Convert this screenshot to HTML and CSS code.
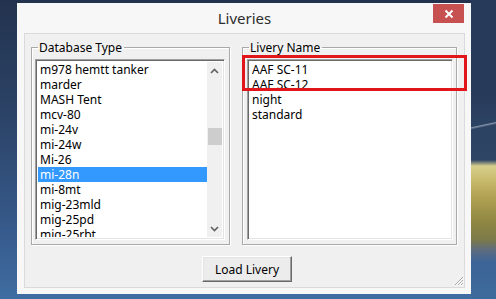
FILE: index.html
```html
<!DOCTYPE html>
<html>
<head>
<meta charset="utf-8">
<link rel="stylesheet" href="styles.css">
</head>
<body>
<div class="desktop">
  <div class="window">
    <div class="titlebar">
      <span class="spacer"></span>
      <span class="title">Liveries</span>
      <span class="close"><svg width="10" height="10" viewBox="0 0 10 10"><path d="M1.5 1.5 L8.5 8.5 M8.5 1.5 L1.5 8.5" stroke="#fff" stroke-width="2"/></svg></span>
    </div>
    <div class="client">
      <div class="groups">
        <fieldset class="group group-db">
          <legend>Database Type</legend>
          <div class="listbox list-db">
            <ul class="items">
              <li>m978 hemtt tanker</li>
              <li>marder</li>
              <li>MASH Tent</li>
              <li>mcv-80</li>
              <li>mi-24v</li>
              <li>mi-24w</li>
              <li>Mi-26</li>
              <li class="selected">mi-28n</li>
              <li>mi-8mt</li>
              <li>mig-23mld</li>
              <li>mig-25pd</li>
              <li>mig-25rbt</li>
            </ul>
            <div class="scrollbar">
              <div class="sb-btn"><svg width="9" height="6" viewBox="0 0 9 6"><path d="M1 5 L4.5 1.5 L8 5" fill="none" stroke="#606060" stroke-width="1.6"/></svg></div>
              <div class="sb-track"><div class="sb-thumb"></div></div>
              <div class="sb-btn"><svg width="9" height="6" viewBox="0 0 9 6"><path d="M1 1 L4.5 4.5 L8 1" fill="none" stroke="#606060" stroke-width="1.6"/></svg></div>
            </div>
          </div>
        </fieldset>
        <fieldset class="group group-livery">
          <legend>Livery Name</legend>
          <div class="listbox list-livery">
            <ul class="items">
              <li>AAF SC-11</li>
              <li>AAF SC-12</li>
              <li>night</li>
              <li>standard</li>
            </ul>
          </div>
        </fieldset>
      </div>
      <div class="actions">
        <button class="btn">Load Livery</button>
      </div>
      <svg class="grip" width="11" height="11" viewBox="0 0 11 11"><path d="M10 2 L2 10 M10 5 L5 10 M10 8 L8 10" stroke="#a8a8a8" stroke-width="1"/><path d="M10.5 3 L3 10.5 M10.5 6 L6 10.5 M10.5 9 L9 10.5" stroke="#ffffff" stroke-width="1"/></svg>
    </div>
    <div class="annotation"></div>
  </div>
  <div class="wallpaper-strip"></div>
</div>
</body>
</html>
```

FILE: styles.css
```css
* { box-sizing: border-box; }
html, body { margin: 0; padding: 0; }
body {
  width: 496px;
  height: 299px;
  overflow: hidden;
  font-family: "Noto Sans", "Open Sans", sans-serif;
  font-size: 12px;
  color: #000;
}
.desktop {
  width: 496px;
  height: 299px;
  padding-left: 17px;
  display: flex;
  align-items: flex-start;
  background: linear-gradient(to bottom, #23334f 0%, #2c4468 40%, #36598a 75%, #3f6da2 100%);
}
.wallpaper-strip {
  flex: none;
  width: 26px;
  height: 299px;
  margin-left: auto;
  background:
    linear-gradient(168deg, transparent 0, transparent 124px, rgba(200,210,225,0.55) 125px, transparent 127px, transparent 100%),
    linear-gradient(to bottom,
      #283a5a 0px, #283a5a 95px,
      #2c4262 118px, #2f4565 160px,
      #d6cf8c 166px, #c9bb6c 180px, #b0a152 198px, #8f8642 222px, #7c7a4a 240px,
      #5d6c80 250px, #3d6496 262px, #3d6a9c 299px);
}
.window {
  flex: none;
  position: relative;
  margin-top: 3px;
  width: 454px;
  height: 291px;
  background: #f7f7f7;
  padding: 0 6px 6px 7px;
  display: flex;
  flex-direction: column;
}
.titlebar {
  height: 30px;
  display: grid;
  grid-template-columns: 1fr auto 1fr;
  align-items: start;
}
.title {
  margin-top: 5px;
  font-size: 15px;
  line-height: 20px;
  color: #2e2e2e;
  font-family: "Noto Sans", sans-serif;
}
.close {
  justify-self: end;
  margin-top: 1px;
  margin-right: 1px;
  width: 31px;
  height: 19px;
  background: #c75050;
  display: flex;
  align-items: center;
  justify-content: center;
}
.close svg { display: block; }
.client {
  position: relative;
  flex: 1;
  background: #f0f0f0;
  border: 1px solid #dadada;
  padding: 6px 6px 0 6px;
  display: flex;
  flex-direction: column;
}
.groups {
  display: flex;
  gap: 12px;
}
.group {
  margin: 0;
  padding: 0;
  min-width: 0;
  height: 205px;
  border: 1px solid #a9a9a9;
  box-shadow: inset 1px 1px 0 #fff, 1px 1px 0 #fff;
  display: block;
}
.group-db { width: 199px; }
.group-livery { width: 215px; }
.group legend {
  margin-left: 6px;
  padding: 0 2px 0 1px;
  line-height: 15px;
  font-size: 12px;
  color: #000;
}
.listbox {
  margin-top: 4px;
  height: 181px;
  background: #fff;
  border-top: 1px solid #a0a0a0;
  border-left: 1px solid #a0a0a0;
  border-right: 1px solid #fff;
  border-bottom: 1px solid #fff;
  box-shadow: inset 1px 1px 0 #696969, inset -1px -1px 0 #e3e3e3;
  padding: 2px;
  display: flex;
  overflow: hidden;
}
.list-db { margin-left: 3px; width: 190px; }
.list-livery { margin-left: 4px; width: 206px; }
.items {
  list-style: none;
  margin: 0;
  padding: 0;
  flex: 1;
  overflow: hidden;
}
.items li {
  height: 15px;
  line-height: 15px;
  padding-left: 2px;
  white-space: nowrap;
}
.items li.selected {
  background: #3399ff;
  color: #fff;
}
.scrollbar {
  width: 15px;
  display: flex;
  flex-direction: column;
  background: #f0f0f0;
}
.sb-btn {
  height: 17px;
  display: flex;
  align-items: center;
  justify-content: center;
}
.sb-track { flex: 1; }
.sb-thumb {
  margin: 49px 0 0 1px;
  height: 17px;
  background: #cdcdcd;
}
.actions {
  margin-top: 11px;
  display: flex;
}
.btn {
  margin-left: 171px;
  width: 90px;
  height: 26px;
  padding: 0;
  font-family: "Noto Sans", sans-serif;
  font-size: 12px;
  color: #000;
  background: #ececec;
  border: 1px solid;
  border-color: #fff #696969 #696969 #fff;
  box-shadow: inset -1px -1px 0 #a0a0a0, inset 1px 1px 0 #e3e3e3;
}
.grip {
  position: absolute;
  right: 0;
  bottom: 1px;
}
.annotation {
  position: absolute;
  left: 225px;
  top: 52px;
  width: 225px;
  height: 36px;
  border: 3px solid #e0161b;
}
```
